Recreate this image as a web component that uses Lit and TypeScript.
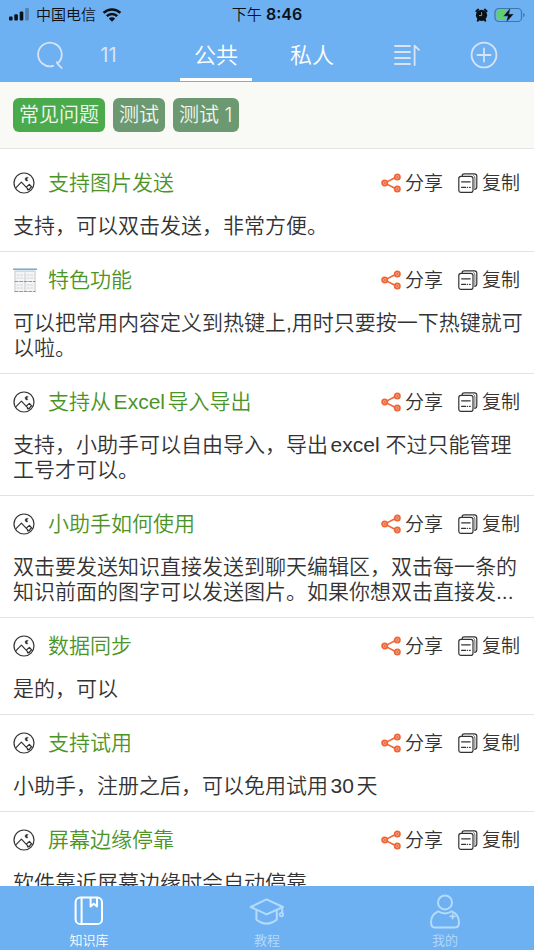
import { LitElement, html, css, svg } from "lit";
import { customElement, property, state } from "lit/decorators.js";
import { classMap } from "lit/directives/class-map.js";

interface Entry {
  title: string;
  text: string;
  thumb?: boolean;
}

const ENTRIES: Entry[] = [
  { title: "支持图片发送", text: "支持，可以双击发送，非常方便。" },
  { title: "特色功能", text: "可以把常用内容定义到热键上,用时只要按一下热键就可以啦。", thumb: true },
  { title: "支持从Excel导入导出", text: "支持，小助手可以自由导入，导出excel 不过只能管理工号才可以。" },
  { title: "小助手如何使用", text: "双击要发送知识直接发送到聊天编辑区，双击每一条的知识前面的图字可以发送图片。如果你想双击直接发..." },
  { title: "数据同步", text: "是的，可以" },
  { title: "支持试用", text: "小助手，注册之后，可以免用试用30天" },
  { title: "屏幕边缘停靠", text: "软件靠近屏幕边缘时会自动停靠" },
];

const reset = css`
  * {
    box-sizing: border-box;
  }
  button {
    margin: 0;
    padding: 0;
    border: 0;
    background: none;
    color: inherit;
    font: inherit;
    cursor: pointer;
  }
  svg {
    display: block;
    flex: none;
    fill: none;
    stroke: currentColor;
    stroke-linecap: round;
    stroke-linejoin: round;
  }
`;

const pictureIcon = html`<svg width="22" height="22" viewBox="0 0 22 22" stroke-width="1.2" aria-hidden="true">
  <circle cx="11" cy="11" r="10" />
  <path d="M2.8 15.8 8.4 10.2 15 17.2M13.2 15.2 16.4 12.4 19.4 15.6M14.4 17.6Q16.6 18.4 17.8 15.2" />
  <path d="M14.8 5.4a1.9 1.9 0 1 0 0 3.4 2.4 2.4 0 0 1 0-3.4Z" fill="currentColor" stroke-width=".4" />
</svg>`;

const thumbIcon = html`<svg width="24" height="25" viewBox="0 0 24 25" aria-hidden="true">
  <path d="M1 1h22v23H1z" fill="#f4f5f6" stroke="none" />
  <path d="M0 1.2h24" stroke="#6fa3c7" stroke-width="1.4" stroke-linecap="butt" />
  <path d="M2 3.2h20" stroke="#c5dcea" stroke-width="1.4" />
  <path d="M2 4v20M12 5v18M22 4v20" stroke="#c8cbce" stroke-width="1" />
  <path d="M2 13.5h20M2 23.5h20" stroke="#94989b" stroke-width="1" stroke-dasharray="3 1.6" />
  <path d="M4 7h6M14 7h6M4 10h6M14 10h6M4 17h6M14 17h6M4 20h6M14 20h6" stroke="#d3d5d7" stroke-width="1.2" stroke-dasharray="2 1.6" />
</svg>`;

const node = (x: number, y: number) => svg`
  <circle cx=${x} cy=${y} r="2.6" fill="#f6b49c" stroke-width="1.8" />
  <circle cx=${x} cy=${y} r="1" fill="currentColor" stroke="none" />`;

const shareIcon = html`<svg width="20" height="20" viewBox="0 0 20 20" aria-hidden="true">
  <path d="M6 8.9 13.4 5M6 11.1l7.4 3.9" stroke-width="1.6" />
  ${node(3.7, 10)}${node(16.3, 4)}${node(16.3, 16)}
</svg>`;

const copyIcon = html`<svg width="20" height="20" viewBox="0 0 20 20" stroke-width="1.2" aria-hidden="true">
  <path d="M4.2 3V2.6Q4.2 .8 6.2 .8H16.4Q18.8 .8 18.8 3.2V14Q18.8 16.2 16.9 16.4" />
  <rect x=".8" y="3.4" width="14.2" height="16" rx="2.2" />
  <path d="M15.6 2.4Q16.9 3.4 16.9 5V16" stroke-width=".7" />
  <path d="M3.6 8.8H12.2M3.6 14.4H7.6M9.4 14.4h.2M11.6 14.4H12.2" />
</svg>`;

@customElement("status-bar")
export class StatusBar extends LitElement {
  static styles = [
    reset,
    css`
      :host {
        display: grid;
        grid-template-columns: 1fr auto 1fr;
        align-items: center;
        height: 27px;
        padding: 0 8px;
        color: #0b1017;
        font-size: 15px;
        line-height: 27px;
      }
      .side {
        display: flex;
        align-items: center;
        gap: 6px;
      }
      .end {
        justify-content: flex-end;
      }
      .side,
      .time {
        padding-top: 1px;
      }
      .clock {
        font-size: 16px;
        font-weight: 600;
      }
    `,
  ];

  render() {
    return html`
      <div class="side">
        <svg width="22" height="13" viewBox="0 0 22 13" aria-hidden="true">
          <g fill="currentColor" stroke="none">
            <rect x="1" y="8.6" width="3.6" height="4" rx="1" />
            <rect x="6.3" y="6.2" width="3.6" height="6.4" rx="1" />
            <rect x="11.7" y="3.4" width="3.6" height="9.2" rx="1" />
            <rect x="17.2" y="0" width="3.6" height="12.6" rx="1" opacity=".3" />
          </g>
        </svg>
        <span>中国电信</span>
        <svg width="20" height="14" viewBox="0 0 20 14" aria-hidden="true">
          <path d="M1.6 4.9a12 12 0 0 1 16.8 0M4.8 8.2a7.4 7.4 0 0 1 10.4 0" stroke-width="2.6" stroke-linecap="butt" />
          <path d="M10 13.8 6.8 10.5a4.6 4.6 0 0 1 6.4 0Z" fill="currentColor" stroke="none" />
        </svg>
      </div>
      <div class="time">下午 <span class="clock">8:46</span></div>
      <div class="side end">
        <svg width="13" height="14" viewBox="0 0 13 14" aria-hidden="true">
          <circle cx="6.5" cy="7.3" r="5.6" fill="currentColor" stroke="none" />
          <path d="M1.4 3.2 3.2 1.6M11.6 3.2 9.8 1.6M2.8 12.6l1-1.4M10.2 12.6l-1-1.4" stroke-width="2" />
          <path d="M6.6 4.6v3H4.4" stroke="#6db1f3" stroke-width=".9" />
        </svg>
        <svg width="32" height="16" viewBox="0 0 32 16" aria-hidden="true">
          <rect x="1" y="1.5" width="26.5" height="13" rx="3.8" stroke="#3f75ad" stroke-width="1.2" />
          <path d="M5 3H12V13H5Q2.6 13 2.6 10.6V5.4Q2.6 3 5 3Z" fill="#62cf6c" stroke="none" />
          <path d="M29.2 5.8v4.4q1.6-.7 1.6-2.2t-1.6-2.2Z" fill="#3f75ad" stroke="none" />
          <path d="M16.6.6 9.2 9.2h4.4L12.2 15.6 19.8 7H15.2Z" fill="currentColor" stroke="#6db1f3" stroke-width=".4" />
        </svg>
      </div>
    `;
  }
}

@customElement("top-bar")
export class TopBar extends LitElement {
  @state() private tab = 0;

  static styles = [
    reset,
    css`
      :host {
        display: grid;
        grid-template-columns: 148fr 192fr 162fr;
        height: 55px;
        padding: 0 12px 0 20px;
        color: #fff;
      }
      .group {
        display: grid;
        grid-template-columns: 1fr 1fr;
        align-items: center;
        justify-items: center;
        color: #d9e3f4;
      }
      .start {
        padding-right: 30px;
      }
      .end {
        padding-left: 8px;
      }
      .count {
        font-size: 20px;
        font-weight: 400;
        line-height: 24px;
      }
      .tabs {
        display: grid;
        grid-template-columns: 1fr 1fr;
        justify-items: center;
      }
      .tab {
        width: 72px;
        padding-top: 4px;
        border-bottom: 3px solid transparent;
        margin-bottom: 1px;
        font-size: 22px;
        line-height: 32px;
      }
      .active {
        border-bottom-color: #fff;
      }
    `,
  ];

  render() {
    return html`
      <div class="group start">
        <button aria-label="搜索">
          <svg width="28" height="28" viewBox="0 0 28 28" stroke-width="1.8">
            <path d="M17.2 24.8A11.8 11.8 0 1 1 21.4 22.6L25.6 27M21.4 22.6 21 21.2" />
          </svg>
        </button>
        <span class="count">11</span>
      </div>
      <div class="tabs" role="tablist">
        ${["公共", "私人"].map(
          (name, i) => html`<button
            role="tab"
            aria-selected=${i === this.tab}
            class=${classMap({ tab: true, active: i === this.tab })}
            @click=${() => (this.tab = i)}
          >${name}</button>`
        )}
      </div>
      <div class="group end">
        <button aria-label="排序">
          <svg width="26" height="22" viewBox="0 0 26 22" stroke-width="1.8">
            <path d="M1 2H16M1 8H16M1 14H16M1 20H16M20.6 21V1.6L25 5.8" />
          </svg>
        </button>
        <button aria-label="添加">
          <svg width="28" height="28" viewBox="0 0 28 28" stroke-width="1.8">
            <circle cx="14" cy="14" r="12.4" />
            <path d="M14 7.4V20.6M7.4 14H20.6" />
          </svg>
        </button>
      </div>
    `;
  }
}

@customElement("tag-strip")
export class TagStrip extends LitElement {
  @state() private selected = 0;

  static styles = [
    reset,
    css`
      :host {
        display: flex;
        gap: 8px;
        padding: 16px 13px;
        border-bottom: 1px solid #e4e4e2;
        background: #f9faf5;
      }
      .tag {
        height: 34px;
        padding: 1px 6px 0;
        border-radius: 6px;
        background: #6c9971;
        color: #f1f8f0;
        font-size: 20px;
        line-height: 33px;
      }
      .active {
        background: #4bab4c;
      }
    `,
  ];

  render() {
    return ["常见问题", "测试", "测试 1"].map(
      (name, i) => html`<button
        class=${classMap({ tag: true, active: i === this.selected })}
        aria-pressed=${i === this.selected}
        @click=${() => (this.selected = i)}
      >${name}</button>`
    );
  }
}

@customElement("entry-row")
export class EntryRow extends LitElement {
  @property({ attribute: false }) entry!: Entry;

  static styles = [
    reset,
    css`
      :host {
        display: block;
        padding: 14px 10px 13px 13px;
        border-bottom: 1px solid #e2e2e2;
        color: #333;
        font-family: "Liberation Sans", "Noto Sans CJK SC", sans-serif;
      }
      .head {
        display: flex;
        align-items: center;
        height: 28px;
        padding-right: 4px;
      }
      .mark {
        display: flex;
        width: 35px;
      }
      .title {
        flex: 1;
        margin: 0;
        color: #4b9426;
        font-size: 21px;
        font-weight: inherit;
        line-height: 28px;
      }
      .actions {
        display: flex;
        gap: 15px;
      }
      .action {
        display: flex;
        align-items: center;
        gap: 4px;
        font-size: 19px;
        line-height: 28px;
      }
      .label {
        padding-top: 2px;
      }
      .share {
        color: #ee6536;
      }
      .text {
        margin: 16px 0 0;
        font-size: 21px;
        line-height: 25px;
      }
    `,
  ];

  render() {
    const { title, text, thumb } = this.entry;
    return html`
      <div class="head">
        <span class="mark">${thumb ? thumbIcon : pictureIcon}</span>
        <h2 class="title">${title}</h2>
        <div class="actions">
          <button class="action"><span class="share">${shareIcon}</span><span class="label">分享</span></button>
          <button class="action">${copyIcon}<span class="label">复制</span></button>
        </div>
      </div>
      <p class="text">${text}</p>
    `;
  }
}

@customElement("bottom-nav")
export class BottomNav extends LitElement {
  static styles = [
    reset,
    css`
      :host {
        display: grid;
        grid-template-columns: repeat(3, 1fr);
        height: 64px;
        background: #6db1f3;
      }
      .item {
        display: flex;
        flex-direction: column;
        align-items: center;
        gap: 2px;
        padding-top: 7px;
        color: #b5dbfb;
        font-size: 13px;
        line-height: 18px;
        text-decoration: none;
      }
      .active {
        color: #fff;
      }
    `,
  ];

  render() {
    return html`
      <a class="item active" href="#library" aria-current="page">
        <svg width="36" height="36" viewBox="0 0 36 36" stroke-width="2">
          <rect x="4.6" y="4.6" width="26.4" height="26.4" rx="4.6" />
          <path d="M10.6 5V30.6M19.6 5V13.4L22.8 10.8 26 13.4V5" />
        </svg>
        知识库
      </a>
      <a class="item" href="#tutorial">
        <svg width="36" height="36" viewBox="0 0 36 36" stroke-width="2">
          <path d="M1.8 14 17.6 6.4 34 14 17.6 21.4Z" />
          <path d="M7.4 17V26.6Q17.6 34.6 27.8 26.6V17M33.2 14.6V20.4" />
          <circle cx="32.4" cy="21.6" r="1.8" stroke-width="1.6" />
        </svg>
        教程
      </a>
      <a class="item" href="#mine">
        <svg width="36" height="36" viewBox="0 0 36 36" stroke-width="2">
          <circle cx="18" cy="9.4" r="7" />
          <path d="M11.2 18.4Q4 21.4 4 29.4 4 34.6 8.6 34.6H27.4Q32 34.6 32 29.4 32 21.4 24.8 18.4 18 22.4 11.2 18.4Z" />
          <path d="M25.6 21V25.8M23.2 23.4H28" stroke-width="1.6" />
        </svg>
        我的
      </a>
    `;
  }
}

@customElement("app-root")
export class AppRoot extends LitElement {
  static styles = [
    reset,
    css`
      :host {
        display: flex;
        flex-direction: column;
        height: 100vh;
        overflow: hidden;
        background: #fff;
        font-family: Inter, "Noto Sans CJK SC", sans-serif;
        font-weight: 350;
        text-autospace: normal;
      }
      .header {
        background: #6db1f3;
      }
      .list {
        flex: 1;
        min-height: 0;
        padding-top: 6px;
        overflow-y: auto;
        scrollbar-width: none;
      }
    `,
  ];

  render() {
    return html`
      <header class="header">
        <status-bar></status-bar>
        <top-bar></top-bar>
      </header>
      <tag-strip></tag-strip>
      <main class="list">${ENTRIES.map((entry) => html`<entry-row .entry=${entry}></entry-row>`)}</main>
      <bottom-nav></bottom-nav>
    `;
  }
}
